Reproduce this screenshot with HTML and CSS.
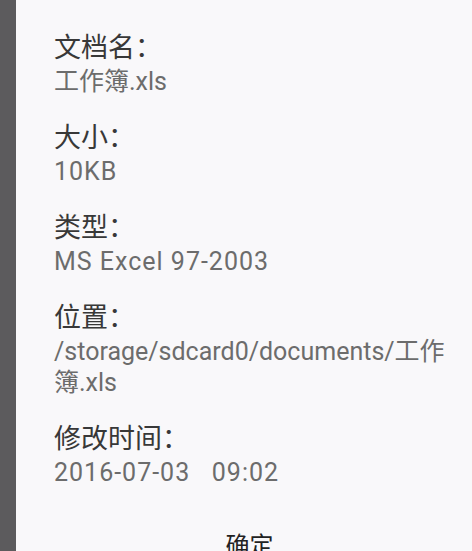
FILE: index.html
```html
<!DOCTYPE html>
<html lang="zh-CN">
<head>
<meta charset="utf-8">
<title>文档属性</title>
<link rel="stylesheet" href="styles.css">
</head>
<body>
<div class="screen">
  <div class="dialog">
    <div class="title">文档属性</div>
    <div class="props">
      <div class="prop">
        <div class="label">文档名：</div>
        <div class="value">工作簿.xls</div>
      </div>
      <div class="prop">
        <div class="label">大小：</div>
        <div class="value wide">10KB</div>
      </div>
      <div class="prop">
        <div class="label">类型：</div>
        <div class="value wide">MS Excel 97-2003</div>
      </div>
      <div class="prop">
        <div class="label">位置：</div>
        <div class="value">/storage/sdcard0/documents/工作簿.xls</div>
      </div>
      <div class="prop">
        <div class="label">修改时间：</div>
        <div class="value wide">2016-07-03&nbsp;&nbsp;&nbsp;09:02</div>
      </div>
    </div>
    <div class="actions">
      <div class="btn">确定</div>
    </div>
  </div>
</div>
</body>
</html>
```

FILE: styles.css
```css
html, body {
  margin: 0;
  padding: 0;
  height: 100%;
  overflow: hidden;
}
body {
  background: #5c5b5d;
  font-family: Roboto, "Noto Sans CJK SC", sans-serif;
}
.screen {
  height: 551px;
  padding-left: 16px;
  display: flex;
}
.dialog {
  flex: 1;
  background: #f9f8fa;
  padding: 0 16px 0 38px;
  display: flex;
  flex-direction: column;
}
.title {
  font-size: 28px;
  line-height: 36px;
  color: #444;
  margin-top: -32px;
  padding-left: 16px;
}
.props {
  padding-top: 27px;
  display: flex;
  flex-direction: column;
  gap: 24px;
}
.label {
  font-size: 27px;
  line-height: 35px;
  color: #383838;
}
.value {
  font-size: 25px;
  line-height: 31px;
  color: #6c6c6c;
}
.value.wide {
  letter-spacing: 1px;
}
.actions {
  margin-top: 42px;
  display: flex;
  justify-content: center;
}
.btn {
  font-size: 24px;
  line-height: 32px;
  color: #222;
  padding-right: 11px;
}
```
